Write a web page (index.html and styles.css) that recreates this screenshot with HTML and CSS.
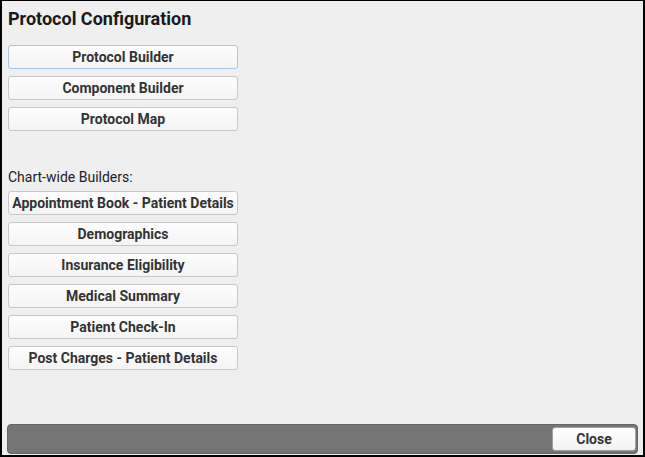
FILE: index.html
```html
<!DOCTYPE html>
<html>
<head>
<meta charset="utf-8">
<link rel="stylesheet" href="styles.css">
</head>
<body>
<div class="dialog">
  <div class="content">
    <h1 class="title">Protocol Configuration</h1>
    <div class="group">
      <button class="btn focused">Protocol Builder</button>
      <button class="btn">Component Builder</button>
      <button class="btn">Protocol Map</button>
    </div>
    <div class="label">Chart-wide Builders:</div>
    <div class="group">
      <button class="btn">Appointment Book - Patient Details</button>
      <button class="btn">Demographics</button>
      <button class="btn">Insurance Eligibility</button>
      <button class="btn">Medical Summary</button>
      <button class="btn">Patient Check-In</button>
      <button class="btn">Post Charges - Patient Details</button>
    </div>
  </div>
  <div class="footer">
    <button class="close">Close</button>
  </div>
</div>
</body>
</html>
```
FILE: styles.css
```css
* { box-sizing: border-box; }
html, body { margin: 0; padding: 0; }
body {
  width: 645px;
  height: 457px;
  font-family: Roboto, "Liberation Sans", sans-serif;
  background: #efefef;
}
.dialog {
  width: 645px;
  height: 457px;
  border: solid #000;
  border-width: 1px 2px 2px 2px;
  background: #efefef;
  display: flex;
  flex-direction: column;
  padding: 0 5px 1px 5px;
}
.content {
  flex: 1;
  display: flex;
  flex-direction: column;
  padding-left: 1px;
}
.title {
  margin: 7px 0 0 0;
  font-size: 18px;
  font-weight: 700;
  color: #1a1a1a;
  line-height: 22px;
  height: 22px;
}
.group {
  display: flex;
  flex-direction: column;
  gap: 7px;
  width: 230px;
}
.title + .group { margin-top: 15px; }
.label {
  margin-top: 38px;
  margin-bottom: 6px;
  font-size: 14px;
  color: #222;
  line-height: 16px;
}
.btn {
  height: 24px;
  width: 230px;
  padding: 0;
  margin: 0;
  border: 1px solid #c8c8c8;
  border-radius: 3px;
  background: linear-gradient(#fdfdfd, #f4f4f4);
  font-family: Roboto, "Liberation Sans", sans-serif;
  font-size: 14px;
  font-weight: 700;
  color: #333;
  text-align: center;
  white-space: nowrap;
}
.btn.focused {
  border-color: #a9c6ee;
}
.footer {
  height: 30px;
  background: #757575;
  border: 1px solid #646464;
  border-radius: 4px;
  display: flex;
  justify-content: flex-end;
  align-items: center;
  padding: 0 1px 0 2px;
}
.close {
  height: 24px;
  width: 84px;
  border: 1px solid #a0a0a0;
  border-radius: 3px;
  background: linear-gradient(#ffffff, #f2f2f2);
  font-family: Roboto, "Liberation Sans", sans-serif;
  font-size: 14px;
  font-weight: 700;
  color: #333;
  padding: 0;
}
```
